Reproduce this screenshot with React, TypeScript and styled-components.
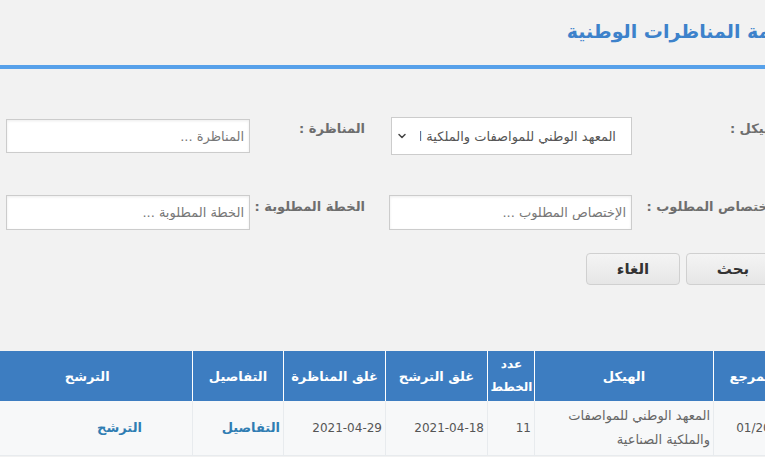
import React from 'react';
import styled, { createGlobalStyle } from 'styled-components';
import { ChevronDown } from 'lucide-react';

const Global = createGlobalStyle`
  html, body { margin: 0; padding: 0; background: #f2f2f2; overflow: hidden; }
  body { width: 765px; height: 457px; font-family: "DejaVu Sans", sans-serif; }
  * { box-sizing: border-box; }
`;

const Page = styled.div`
  width: 790px;
  direction: rtl;
  font-family: "DejaVu Sans", "Noto Sans", sans-serif;
`;

const Header = styled.header`
  height: 69px;
  margin-right: -8px;
  display: flex;
  align-items: center;
  padding-bottom: 3px;
  border-bottom: 4px solid #57a1ea;
`;

const Title = styled.h1`
  margin: 0;
  font-size: 19px;
  font-weight: bold;
  color: #3d82cb;
`;

const Form = styled.div`
  margin-top: 48px;
  padding-right: 8px;
  display: grid;
  grid-template-columns: 150px 243px 139px 244px;
  grid-auto-rows: auto;
  row-gap: 40px;
  justify-content: start;
`;

const Label = styled.label<{ $pad?: number }>`
  align-self: start;
  padding-top: 2px;
  padding-right: ${p => p.$pad ?? 0}px;
  font-size: 13px;
  line-height: 20px;
  font-weight: bold;
  color: #6e6e6e;
  white-space: nowrap;
`;

const Input = styled.input<{ $h?: number }>`
  align-self: center;
  width: 100%;
  height: ${p => p.$h ?? 35}px;
  border: 1px solid #cccccc;
  background: #fff;
  box-shadow: inset 0 1px 3px rgba(0, 0, 0, 0.08);
  padding: 0 5px;
  font-family: "DejaVu Sans", sans-serif;
  font-size: 13px;
  color: #555;
  direction: rtl;
  outline: none;
  &::placeholder { color: #777; }
`;

const SelectWrap = styled.div`
  position: relative;
  align-self: center;
  width: 241px;
  height: 38px;
`;

const Select = styled.select`
  appearance: none;
  width: 100%;
  height: 100%;
  border: 1px solid #cccccc;
  background: #fff;
  padding: 0 15px 0 28px;
  font-family: "DejaVu Sans", sans-serif;
  font-size: 13px;
  color: #555;
  direction: rtl;
  outline: none;
`;

const Chevron = styled(ChevronDown)`
  position: absolute;
  left: 5px;
  top: 13px;
  width: 12px;
  height: 12px;
  color: #444;
  pointer-events: none;
`;

const Buttons = styled.div`
  margin-top: 23px;
  padding-right: 10px;
  display: flex;
  gap: 6px;
`;

const Button = styled.button`
  width: 94px;
  height: 32px;
  border: 1px solid #d0d0d0;
  border-radius: 4px;
  background: linear-gradient(#f4f4f4, #e6e6e6);
  font-family: "DejaVu Sans", sans-serif;
  font-size: 15px;
  font-weight: bold;
  color: #333;
`;

const Table = styled.table`
  margin-top: 66px;
  width: 790px;
  border-collapse: collapse;
  table-layout: fixed;
`;

const Th = styled.th<{ $pr?: number; $fs?: number }>`
  height: 50px;
  background: #3d7dc1;
  color: #fff;
  font-size: ${p => p.$fs ?? 13}px;
  font-weight: bold;
  line-height: 23px;
  text-align: center;
  padding: 0 ${p => p.$pr ?? 1}px 0 1px;
  border-left: 1px solid #fff;
  &:last-child { border-left: none; }
`;

const Td = styled.td<{ $pr?: number }>`
  background: #f7f8f9;
  border: 1px solid #e8ebee;
  border-top: none;
  padding: 3px ${p => p.$pr ?? 3}px 3px 3px;
  font-size: 13px;
  line-height: 24px;
  color: #666;
  text-align: right;
  vertical-align: middle;
`;

const Num = styled.span`
  font-size: 12px;
  color: #555;
`;

const LinkText = styled.a`
  color: #2f7db3;
  font-weight: bold;
  text-decoration: none;
`;

const columns = [
  { title: 'المرجع', w: 76, pr: 1, fs: 13 },
  { title: 'الهيكل', w: 179, pr: 1, fs: 13 },
  { title: 'عدد الخطط', w: 47, pr: 0, fs: 12 },
  { title: 'غلق الترشح', w: 102, pr: 1, fs: 13 },
  { title: 'غلق المناظرة', w: 102, pr: 1, fs: 13 },
  { title: 'التفاصيل', w: 91, pr: 1, fs: 13 },
  { title: 'الترشح', w: 193, pr: 18, fs: 13 },
];

export default function App() {
  return (
    <Page>
      <Global />
      <Header>
        <Title>قائمة المناظرات الوطنية</Title>
      </Header>
      <Form>
        <Label>الهيكل :</Label>
        <SelectWrap>
          <Select defaultValue="1">
            <option value="1">المعهد الوطني للمواصفات والملكية الصناعية</option>
          </Select>
          <Chevron strokeWidth={3} />
        </SelectWrap>
        <Label $pad={24}>المناظرة :</Label>
        <Input $h={34} placeholder="المناظرة ..." />

        <Label>الإختصاص المطلوب :</Label>
        <Input placeholder="الإختصاص المطلوب ..." />
        <Label $pad={24}>الخطة المطلوبة :</Label>
        <Input placeholder="الخطة المطلوبة ..." />
      </Form>
      <Buttons>
        <Button>بحث</Button>
        <Button>الغاء</Button>
      </Buttons>
      <Table>
        <colgroup>
          {columns.map(c => (
            <col key={c.title} style={{ width: c.w }} />
          ))}
        </colgroup>
        <thead>
          <tr>
            {columns.map(c => (
              <Th key={c.title} $pr={c.pr} $fs={c.fs}>{c.title}</Th>
            ))}
          </tr>
        </thead>
        <tbody>
          <tr>
            <Td><Num>01/2021</Num></Td>
            <Td>المعهد الوطني للمواصفات والملكية الصناعية</Td>
            <Td><Num>11</Num></Td>
            <Td><Num>2021-04-18</Num></Td>
            <Td><Num>2021-04-29</Num></Td>
            <Td><LinkText href="#">التفاصيل</LinkText></Td>
            <Td $pr={50}><LinkText href="#">الترشح</LinkText></Td>
          </tr>
        </tbody>
      </Table>
    </Page>
  );
}
